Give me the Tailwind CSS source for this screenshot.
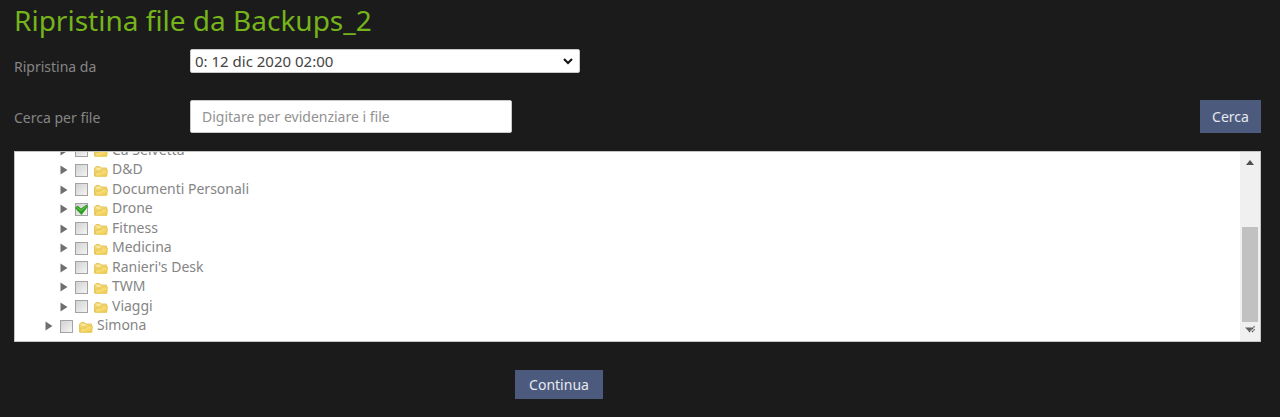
<!DOCTYPE html>
<html lang="it">

<head>
  <meta charset="UTF-8" />
  <meta name="viewport" content="width=device-width, initial-scale=1.0" />
  <title>Ripristina file da Backups_2</title>
  <script src="https://cdn.jsdelivr.net/npm/@tailwindcss/browser@4"></script>
</head>

<body class="bg-[#1b1b1b] font-['Noto_Sans',sans-serif] text-sm text-[#858585]">

  <!-- Shared icons -->
  <svg class="absolute size-0">
    <defs>
      <linearGradient id="folderBack" x1="0" y1="0" x2="0" y2="1">
        <stop offset="0" stop-color="#f5dc78" />
        <stop offset="1" stop-color="#e9c650" />
      </linearGradient>
      <linearGradient id="folderFront" x1="0" y1="0" x2="1" y2="1">
        <stop offset="0" stop-color="#fdeea6" />
        <stop offset="1" stop-color="#efc63f" />
      </linearGradient>
    </defs>
    <symbol id="arrow" viewBox="0 0 8 10">
      <path d="M.5 .5 7.5 5 .5 9.5Z" fill="#6f6f6f" />
    </symbol>
    <symbol id="folder" viewBox="0 0 14 12">
      <path d="M.5 11V3.2L2 1.5h3.5L7 3h5.5v8Z" fill="url(#folderBack)" stroke="#e6c565" />
      <path d="M1 11.2 2.5 7.5l4.5-.5L8.5 5h5L12.8 11.2Z" fill="url(#folderFront)" stroke="#e8c552" stroke-width=".8" />
      <path d="M2.5 4h4" stroke="#fff8d8" />
    </symbol>
  </svg>

  <main class="pr-[19px] pl-[14px]">
    <h1 class="h-[49px] pt-[2px] text-[28px] leading-[37px] text-[#76b41c]">Ripristina file da Backups_2</h1>

    <form>
      <div class="flex h-[51px] items-start">
        <label for="snapshot" class="w-[176px] pt-2 leading-5">Ripristina da</label>
        <div class="relative w-[390px]">
          <select id="snapshot" class="block h-[24px] w-full appearance-none rounded-xs border border-[#c8c8c8] bg-white px-1 text-[15px] leading-5 text-[#444]">
            <option>0: 12 dic 2020 02:00</option>
          </select>
          <svg class="pointer-events-none absolute top-2 right-[7px] h-[8px] w-[10px]" viewBox="0 0 10 8" fill="none" stroke="#111" stroke-width="2">
            <path d="m1 2 4 4 4-4" />
          </svg>
        </div>
      </div>

      <div class="flex h-[51px] items-start">
        <label for="search" class="w-[176px] pt-2 leading-5">Cerca per file</label>
        <input id="search" type="text" placeholder="Digitare per evidenziare i file" class="h-[33px] w-[322px] rounded-xs border border-[#c8c8c8] bg-white px-[11px] text-[#444] placeholder:text-[#929292]" />
        <button type="button" class="ml-auto h-[33px] w-[61px] bg-[#4c5a7d] text-[#e6e9f0]">Cerca</button>
      </div>

      <!-- File tree -->
      <div class="flex h-[191px] border border-[#c4c4c4] bg-white">
        <div class="flex flex-1 flex-col justify-end overflow-hidden pb-[6px] pl-[30px]">
          <ul id="tree" class="grid h-[195px] shrink-0 auto-rows-fr"></ul>
        </div>
        <div class="flex w-[20px] flex-col items-center bg-[#f0f0f0] pt-2 pb-2">
          <svg class="h-[5px] w-[8px]" viewBox="0 0 8 5"><path d="M0 5 4 0l4 5Z" fill="#505050" /></svg>
          <div class="mt-auto h-[95px] w-[16px] bg-[#c1c1c1]"></div>
          <svg class="mt-[2px] h-[9px] w-[12px]" viewBox="0 0 12 9">
            <path d="M1 3.5h8L5 7.5Z" fill="#606060" />
            <path d="m5 8 6-6M8 8l3-3" stroke="#505050" stroke-width="1.2" stroke-dasharray="1.6 .5" />
          </svg>
        </div>
      </div>

      <div class="flex h-[75px] pt-7 pl-[501px]">
        <button type="submit" class="h-[29px] w-[88px] bg-[#4c5a7d] text-[#e6e9f0]">Continua</button>
      </div>
    </form>
  </main>

  <template id="row">
    <li class="flex items-center">
      <button type="button" class="mr-[7px]" aria-label="Espandi"><svg class="mt-[2px] h-[10px] w-[8px]"><use href="#arrow" /></svg></button>
      <label class="flex items-center">
        <span class="relative mt-[2px] mr-[6px] size-[13px]">
          <input type="checkbox" class="peer block size-[13px] appearance-none border border-[#a3a3a3] bg-linear-to-br from-[#d2d2d2] to-[#f4f4f4]" />
          <svg class="pointer-events-none absolute inset-0 hidden size-[13px] peer-checked:block" viewBox="0 0 13 13">
            <path d="M0 5 2.5 2.5 6 5.5 11.5 1.5 13 3.5 6.5 12Z" fill="#2f9e22" />
            <path d="m2 4.5 4 3 5-4" fill="none" stroke="#6ccb55" />
          </svg>
        </span>
        <svg class="mt-[3px] mr-[4px] h-[12px] w-[14px]"><use href="#folder" /></svg>
        <span class="name leading-[18px]"></span>
      </label>
    </li>
  </template>

  <script>
    const folders = [
      { name: "Ca Selvetta" },
      { name: "D&D" },
      { name: "Documenti Personali" },
      { name: "Drone", checked: true },
      { name: "Fitness" },
      { name: "Medicina" },
      { name: "Ranieri's Desk" },
      { name: "TWM" },
      { name: "Viaggi" },
      { name: "Simona", root: true },
    ];

    const tree = document.getElementById("tree");
    const template = document.getElementById("row");

    folders.forEach(folder => {
      const row = template.content.cloneNode(true);
      row.querySelector("li").classList.add(folder.root ? "pl-0" : "pl-[15px]");
      row.querySelector("input").checked = !!folder.checked;
      row.querySelector(".name").textContent = folder.name;
      tree.appendChild(row);
    });
  </script>

</body>

</html>
